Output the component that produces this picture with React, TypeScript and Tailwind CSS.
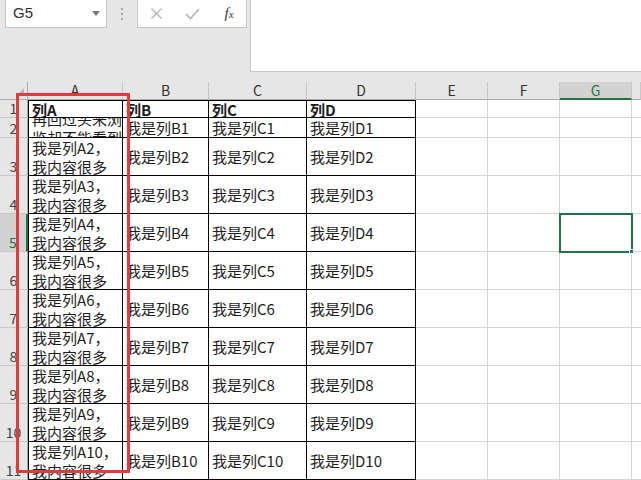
import React from "react";

const cols = ["A", "B", "C", "D", "E", "F", "G", ""];

type Row = { n: number; a: React.ReactNode; b: string; c: string; d: string };

const rows: Row[] = [];
rows.push({ n: 1, a: "列A", b: "列B", c: "列C", d: "列D" });
rows.push({
  n: 2,
  a: (
    <>
      <div className="whitespace-nowrap">再回过头来浏</div>
      <div className="whitespace-nowrap">览却不能看到</div>
    </>
  ),
  b: "我是列B1",
  c: "我是列C1",
  d: "我是列D1",
});
for (let i = 2; i <= 10; i++) {
  rows.push({
    n: i + 1,
    a: (
      <>
        <div className="whitespace-nowrap">我是列A{i}，</div>
        <div className="whitespace-nowrap">我内容很多</div>
      </>
    ),
    b: `我是列B${i}`,
    c: `我是列C${i}`,
    d: `我是列D${i}`,
  });
}

function BodyCell({ children, first, bold, colA }: { children: React.ReactNode; first: boolean; bold: boolean; colA?: boolean }) {
  return (
    <div
      className={
        "flex items-center overflow-hidden border-r border-b border-black pl-[3px] pr-[1px] text-[15px] leading-[19px] text-[#1e1e1e] " +
        (first ? "border-t " : "") +
        (colA ? "border-l " : "") +
        (bold ? "font-bold" : "")
      }
    >
      <div className="min-w-0 whitespace-nowrap">{children}</div>
    </div>
  );
}

export default function App() {
  return (
    <div
      className="relative h-[480px] w-[641px] overflow-hidden bg-white"
      style={{ fontFamily: '"Noto Sans CJK SC", "Noto Sans", sans-serif' }}
    >
      {/* formula bar area */}
      <div className="flex h-[82px] items-start bg-[#e6e6e6]">
        <div className="ml-[5px] flex h-[28px] w-[102px] items-center justify-between border-x border-b border-[#c6c6c6] bg-white pl-[7px] pr-[6px]">
          <span className="text-[15px] text-[#333]" style={{ fontFamily: '"Liberation Sans", sans-serif' }}>G5</span>
          <svg width="8" height="5" viewBox="0 0 8 5">
            <path d="M0 0 L8 0 L4 5 Z" fill="#7a7a7a" />
          </svg>
        </div>
        <div className="ml-[14px] mt-[8px] flex flex-col gap-[3px]">
          <div className="h-[2px] w-[2px] bg-[#a8a8a8]" />
          <div className="h-[2px] w-[2px] bg-[#a8a8a8]" />
          <div className="h-[2px] w-[2px] bg-[#a8a8a8]" />
        </div>
        <div className="ml-[14px] grid h-[28px] w-[110px] grid-cols-3 items-center border-x border-b border-[#c6c6c6] bg-white">
          <div className="flex justify-center">
            <svg width="13" height="13" viewBox="0 0 13 13">
              <path d="M1.5 1.5 L11.5 11.5 M11.5 1.5 L1.5 11.5" stroke="#b4b4b4" strokeWidth="1.4" />
            </svg>
          </div>
          <div className="flex justify-center">
            <svg width="15" height="13" viewBox="0 0 15 13">
              <path d="M1 7 L5.5 11.5 L14 2" stroke="#b4b4b4" strokeWidth="1.6" fill="none" />
            </svg>
          </div>
          <div className="flex justify-center pl-[2px]">
            <span className="text-[15px] italic text-[#3a3a3a]" style={{ fontFamily: '"Liberation Serif", serif' }}>
              f<span className="text-[11px]">x</span>
            </span>
          </div>
        </div>
        <div className="ml-[3px] h-[72px] flex-1 border-b border-l border-[#c6c6c6] bg-white" />
      </div>

      {/* sheet */}
      <div className="grid grid-cols-[28px_95px_86px_98px_109px_72px_72px_72px_1fr] grid-rows-[18px_18px_20px_repeat(9,38px)]">
        {/* header row */}
        <div className="relative border-r border-b border-[#ababab] bg-[#e6e6e6]">
          <svg className="absolute bottom-[3px] right-[3px]" width="8" height="8" viewBox="0 0 8 8">
            <path d="M8 0 L8 8 L0 8 Z" fill="#b8b8b8" />
          </svg>
        </div>
        {cols.map((c, i) =>
          c === "G" ? (
            <div key={i} className="flex items-center justify-center border-r border-b-2 border-r-[#c8c8c8] border-b-[#217346] bg-[#d2d2d2] text-[14px] text-[#217346]">
              {c}
            </div>
          ) : (
            <div key={i} className="flex items-center justify-center border-r border-b border-r-[#c8c8c8] border-b-[#ababab] bg-[#e6e6e6] text-[14px] text-[#333]">
              {c}
            </div>
          )
        )}

        {rows.map((r, ri) => (
          <React.Fragment key={r.n}>
            {r.n === 5 ? (
              <div className="flex items-end justify-center border-r-2 border-b border-r-[#217346] border-b-[#c8c8c8] bg-[#d2d2d2] pb-[1px] text-[14px] leading-[16px] text-[#217346]">
                {r.n}
              </div>
            ) : (
              <div className="flex items-end justify-center border-r border-b border-r-[#ababab] border-b-[#c8c8c8] bg-[#e6e6e6] pb-[1px] text-[14px] leading-[16px] text-[#444]">
                {r.n}
              </div>
            )}
            <BodyCell first={ri === 0} bold={ri === 0} colA>
              {r.a}
            </BodyCell>
            <BodyCell first={ri === 0} bold={ri === 0}>
              {r.b}
            </BodyCell>
            <BodyCell first={ri === 0} bold={ri === 0}>
              {r.c}
            </BodyCell>
            <BodyCell first={ri === 0} bold={ri === 0}>
              {r.d}
            </BodyCell>
            <div className="border-r border-b border-[#d4d4d4]" />
            <div className="border-r border-b border-[#d4d4d4]" />
            <div className="border-r border-b border-[#d4d4d4]" />
            <div className="border-b border-[#d4d4d4]" />
          </React.Fragment>
        ))}
      </div>

      {/* selection G5 */}
      <div className="absolute left-[559px] top-[213px] h-[40px] w-[74px] border-2 border-[#217346]">
        <div className="absolute -bottom-[3px] -right-[3px] h-[5px] w-[5px] border border-white bg-[#217346]" />
      </div>

      {/* red annotation rectangle */}
      <div className="absolute left-[16px] top-[93px] h-[380px] w-[114px] border-[3px] border-[#e23b3b]" />
    </div>
  );
}
